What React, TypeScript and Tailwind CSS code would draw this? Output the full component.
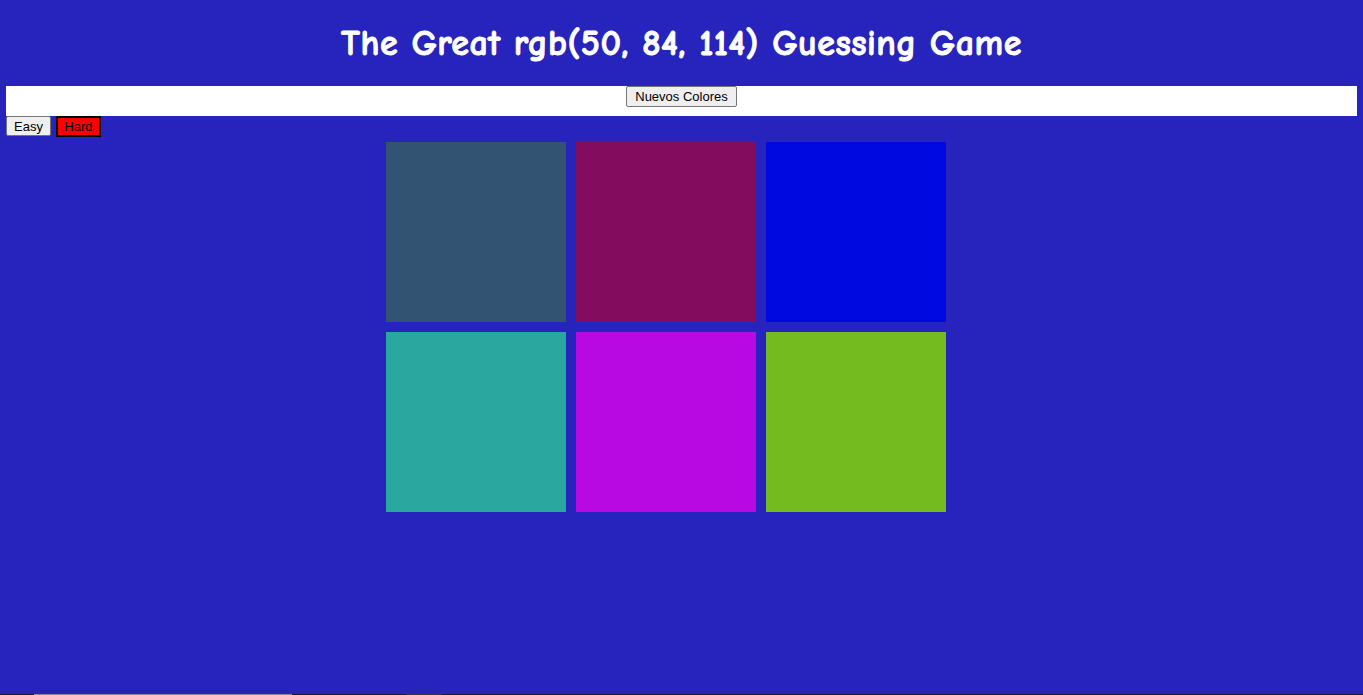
import React from "react";

const colors = [
  "#325472",
  "#840c5f",
  "#0009e0",
  "#2aa89f",
  "#b909e2",
  "#74bb1f",
];

export default function App() {
  return (
    <div className="relative w-full h-[695px] overflow-hidden bg-[#2723bd] px-[6px]">
      <h1
        className="h-[86px] pt-[2px] flex items-center justify-center text-white text-[36px] font-bold tracking-[0.5px] [-webkit-text-stroke:0.9px_white]"
        style={{ fontFamily: '"Comic Sans MS", "Comic Neue", cursive' }}
      >
        The Great rgb(50, 84, 114) Guessing Game
      </h1>
      <div className="bg-white h-[30px] flex justify-center items-start">
        <button className="h-[21px] px-[8px] bg-[#efefef] border border-[#767676] rounded-[2px] text-[13px] leading-none text-black font-['Liberation_Sans',Arial,sans-serif]">
          Nuevos Colores
        </button>
      </div>
      <div className="flex gap-[5px] items-start">
        <button className="w-[45px] h-[20px] bg-[#efefef] border border-[#767676] rounded-[2px] text-[13px] leading-none text-black font-['Liberation_Sans',Arial,sans-serif]">
          Easy
        </button>
        <button className="w-[45px] h-[21px] bg-[#ff0000] border-2 border-black text-[13px] leading-none text-black font-['Liberation_Sans',Arial,sans-serif]">
          Hard
        </button>
      </div>
      <div className="w-[600px] ml-[375px] mt-[5px] pl-[5px] flex flex-wrap gap-[10px]">
        {colors.map((c, i) => (
          <div key={i} className="w-[180px] h-[180px]" style={{ backgroundColor: c }} />
        ))}
      </div>
      <div className="absolute left-0 right-0 bottom-0 h-[1px] bg-[#1b1530] flex">
        <div className="ml-[34px] w-[258px] bg-[#8a8a9a]" />
        <div className="ml-[114px] w-[36px] bg-[#3a3540]" />
      </div>
    </div>
  );
}
